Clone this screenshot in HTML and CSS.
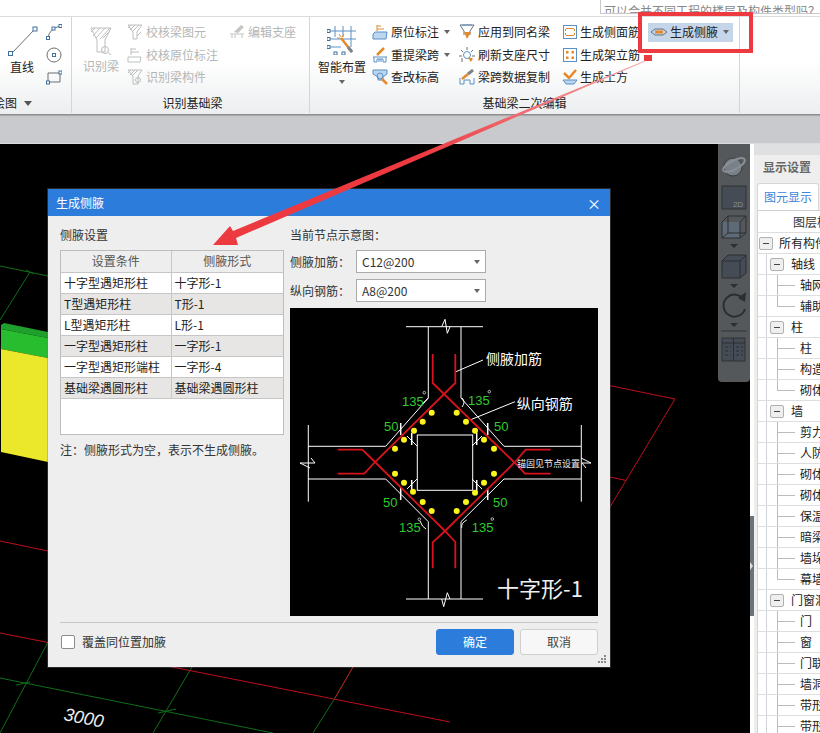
FILE: index.html
```html
<!DOCTYPE html>
<html lang="zh-CN">
<head>
<meta charset="utf-8">
<title>生成侧腋</title>
<link rel="stylesheet" href="styles.css">
</head>
<body>
<div class="app">
  <div class="topbar"><div class="tip">可以合并不同工程的楼层及构件类型吗？</div></div>

  <div class="ribbon">
    <section class="group g1">
      <div class="group-body">
        <div class="large large-line">
          <svg class="lg-ico" width="32" height="32" viewBox="0 0 32 32"><path class="ln-gray" d="M5 29 29 4"/><rect class="sq" x="2.5" y="26.5" width="4" height="4"/><rect class="sq" x="27" y="2" width="4" height="4"/></svg>
          <span>直线</span>
        </div>
        <div class="col col-draw">
          <div class="row"><svg class="ico" width="16" height="16" viewBox="0 0 16 16"><path class="ln-gray" d="M2 14Q3 5 14 2"/><rect class="sq" x="0.5" y="12.5" width="3" height="3"/><rect class="sq" x="6" y="3" width="3" height="3"/><rect class="sq" x="13" y="0.5" width="3" height="3"/></svg></div>
          <div class="row"><svg class="ico" width="16" height="16" viewBox="0 0 16 16"><circle class="ln-gray" cx="8" cy="8" r="7"/><rect class="sq" x="6.5" y="6.5" width="3" height="3"/></svg></div>
          <div class="row"><svg class="ico" width="16" height="16" viewBox="0 0 16 16"><path class="ln-gray" d="M2 4H14V13H2Z"/><rect class="sq" x="0.5" y="12" width="3" height="3"/><rect class="sq" x="13" y="2" width="3" height="3"/></svg></div>
        </div>
      </div>
      <div class="group-label label-start">绘图<i class="caret caret-big"></i></div>
    </section>

    <section class="group g2">
      <div class="group-body">
        <div class="large large-rec disabled">
          <svg class="lg-ico" width="24" height="30" viewBox="0 0 24 30"><path class="ln-dis" d="M2 2H22L16 14V26H8V14Z"/><path class="ln-dis" d="M6 2 2 6M11 2 4 10M16 2 7 12M21 2 11 13M21 5 14 12"/><circle class="ln-dis" cx="16" cy="24" r="3.5"/><path class="ln-dis" d="M19 26.5 22 29"/></svg>
          <span>识别梁</span>
        </div>
        <div class="col col-rec disabled">
          <div class="row"><svg class="ico" width="16" height="16" viewBox="0 0 16 16"><path class="ln-dis" d="M1 1H15L10 8V15H6V8Z"/><path class="ln-dis" d="M4 1 1 4M8 1 3 6M12 1 6 7M10 12 14 8"/></svg><span>校核梁图元</span></div>
          <div class="row"><svg class="ico" width="16" height="16" viewBox="0 0 16 16"><path class="ln-dis" d="M4 1V8M4 2H9M4 5H12"/><path class="ln-dis" d="M1 10H14L13 15H1Z"/></svg><span>校核原位标注</span></div>
          <div class="row"><svg class="ico" width="16" height="16" viewBox="0 0 16 16"><path class="ln-dis" d="M1 1H15L11 7V15H6V7Z"/><path class="ln-dis" d="M4 1 1 4M8 1 3 6M11 1 6 6"/><circle class="ln-dis" cx="11" cy="11" r="2.5"/></svg><span>识别梁构件</span></div>
        </div>
        <div class="col col-edit disabled">
          <div class="row"><svg class="ico" width="16" height="16" viewBox="0 0 16 16"><path class="ln-dis" d="M1 10H15M3 14V11M13 14V11M6 14V11"/><path class="fill-dis" d="M5 8 12 1 15 3 9 9Z"/></svg><span>编辑支座</span></div>
        </div>
      </div>
      <div class="group-label">识别基础梁</div>
    </section>

    <section class="group g3">
      <div class="group-body">
        <div class="large large-smart">
          <svg class="lg-ico" width="30" height="30" viewBox="0 0 30 30"><path class="ln-blue" d="M1 6H29M1 14H29M1 22H14M8 1V12M16 1V12M24 1V22"/><rect class="sq" x="0" y="4.5" width="3" height="3"/><rect class="sq" x="0" y="12.5" width="3" height="3"/><rect class="sq" x="0" y="20.5" width="3" height="3"/><path class="ln-orange-thick" d="M14 13 25 27"/><path class="ln-gray-thick" d="M21 22 25 27"/><path class="ln-orange" d="M12 9 14 12M17 9 15 12M10 13H13"/><rect class="sq" x="7" y="27" width="3" height="3"/><rect class="sq" x="15" y="27" width="3" height="3"/></svg>
          <span>智能布置</span>
          <i class="caret caret-large"></i>
        </div>
        <div class="col col-a">
          <div class="row"><svg class="ico" width="16" height="16" viewBox="0 0 16 16"><path class="ln-orange" d="M5 1V7M5 2H9M5 5H12"/><path class="fill-lblue" d="M1 10 3 8H15L14 15H1Z"/></svg><span>原位标注</span><i class="caret"></i></div>
          <div class="row"><svg class="ico" width="16" height="16" viewBox="0 0 16 16"><path class="ln-orange-thick" d="M5 8 12 1"/><path class="ln-blue" d="M1 10H15M2 10V15H5V12H11V15H14V10M7 12V15M9 12V15"/></svg><span>重提梁跨</span><i class="caret"></i></div>
          <div class="row"><svg class="ico" width="16" height="16" viewBox="0 0 16 16"><path class="fill-lblue" d="M1 1H15V5L11 8V11H6V8L1 5Z"/><circle class="ln-blue" cx="8" cy="7" r="3"/><path class="ln-orange-thick" d="M10 10 15 15"/></svg><span>查改标高</span></div>
        </div>
        <div class="col col-b">
          <div class="row"><svg class="ico" width="16" height="16" viewBox="0 0 16 16"><path class="ln-gray" d="M1 1H15L11 7V11M1 1 5 7V11"/><path class="ln-blue" d="M3 1H13"/><path class="fill-orange" d="M5 8H12L8 15Z"/></svg><span>应用到同名梁</span></div>
          <div class="row"><svg class="ico" width="16" height="16" viewBox="0 0 16 16"><circle class="ln-blue" cx="8" cy="8" r="3.5"/><path class="ln-gray" d="M8 0V3M2 3 4 5M14 3 12 5M0 9H3M13 9H16M3 15V11"/><path class="fill-orange" d="M9 11 14 11 12 15Z"/></svg><span>刷新支座尺寸</span></div>
          <div class="row"><svg class="ico" width="16" height="16" viewBox="0 0 16 16"><path class="ln-blue" d="M1 9V15H5V11H11V15H15V9"/><path class="ln-orange-thick" d="M3 10 9 5"/><path class="ln-gray-thick" d="M9 5 14 1"/></svg><span>梁跨数据复制</span></div>
        </div>
        <div class="col col-c">
          <div class="row"><svg class="ico" width="16" height="16" viewBox="0 0 16 16"><rect class="ln-blue" x="1.5" y="1.5" width="13" height="13"/><path class="ln-orange" d="M4 4.5H12M4 11.5H12M3.5 5V7M12.5 5V7M3.5 9V11M12.5 9V11"/></svg><span>生成侧面筋</span></div>
          <div class="row"><svg class="ico" width="16" height="16" viewBox="0 0 16 16"><rect class="ln-blue" x="1.5" y="1.5" width="13" height="13"/><rect class="fill-orange" x="4" y="4" width="2.5" height="2.5"/><rect class="fill-orange" x="9.5" y="4" width="2.5" height="2.5"/><rect class="fill-orange" x="4" y="9.5" width="2.5" height="2.5"/><rect class="fill-orange" x="9.5" y="9.5" width="2.5" height="2.5"/></svg><span>生成架立筋</span></div>
          <div class="row"><svg class="ico" width="16" height="16" viewBox="0 0 16 16"><path class="ln-orange-thick" d="M2 4 7 9 14 1"/><path class="fill-lblue" d="M1 11H15L12 15H4Z"/></svg><span>生成土方</span></div>
        </div>
        <div class="col col-d">
          <div class="row"><div class="hi-btn"><svg class="ico" width="16" height="16" viewBox="0 0 16 16"><path class="ln-gray" d="M0 8 4 5H12L16 8 12 11H4Z"/><rect class="fill-orange" x="4" y="6.5" width="8" height="3"/></svg><span>生成侧腋</span><i class="caret"></i></div></div>
        </div>
      </div>
      <div class="group-label">基础梁二次编辑</div>
    </section>
  </div>

  <div class="band"></div>

  <div class="workspace">
    <div class="canvas">
      <svg class="scene" width="750" height="589" viewBox="0 144 750 589">
        <path class="cad-green" d="M0 266 48 276M30 272 0 320M26 270 34 274M0 678 273 733M48 642 0 733M192 667 153 733M353 667 335 698 313 733M16 685 30 682M158 713 176 709"/>
        <path class="cad-red" d="M0 541 48 551M0 633 450 722M610 385.700 675 399 610 507M610 477 626 480.500M353 667 335 698"/>
        <path class="block-top" d="M1 325 4 323 48 332V338L1 329Z"/>
        <path class="block-green" d="M1 329 48 338V358L1 349Z"/>
        <path class="block-yellow" d="M1 349 48 358V462L1 452Z"/>
        <text class="dim" transform="translate(63 720) rotate(11)">3000</text>
      </svg>

      <aside class="viewbar">
        <svg width="32" height="238" viewBox="0 0 32 238">
          <circle class="tb-sphere" cx="15" cy="23" r="9"/>
          <ellipse class="tb-ring" cx="16" cy="21" rx="12" ry="4.500" transform="rotate(-28 16 21)"/>
          <rect class="tb-box" x="4" y="42" width="24" height="23"/>
          <text class="tb-2d" x="20" y="63">2D</text>
          <path class="tb-fill" d="M4 78H22V94H4Z"/>
          <path class="tb-line" d="M4 78 10 72H28V89L22 94H4ZM22 78 28 72M22 78V94M10 72V89H28M4 94 10 89"/>
          <path class="tb-caret" d="M12 100H20L16 104Z"/>
          <path class="tb-fill tb-line" d="M4 117 10 111H28V129L22 134H4Z"/>
          <path class="tb-line" d="M4 117H22V134M22 117 28 111"/>
          <path class="tb-caret" d="M12 140H20L16 144Z"/>
          <path class="tb-arc" d="M26 156A11 11 0 1 0 27 165"/>
          <path class="tb-caret" d="M28 148 27 158 20 154ZM12 179H20L16 183Z"/>
          <path class="tb-rule" d="M3 187H29"/>
          <rect class="tb-box" x="4" y="194" width="23" height="23"/>
          <path class="tb-line" d="M15.500 194V217M4 199H27M7 203H10M12 203H13M18 203H21M23 203H25M7 207H10M12 207H13M18 207H21M23 207H25M7 211H10M12 211H13M18 211H21M23 211H25"/>
        </svg>
      </aside>

      <div class="dialog">
        <header class="dlg-title"><span>生成侧腋</span><span class="dlg-close">×</span></header>
        <div class="dlg-main">
          <div class="dlg-left">
            <div class="cap">侧腋设置</div>
            <div class="tbl-box">
              <table class="tbl">
                <thead><tr><th>设置条件</th><th>侧腋形式</th></tr></thead>
                <tbody>
                  <tr><td>十字型遇矩形柱</td><td>十字形-1</td></tr>
                  <tr class="alt"><td>T型遇矩形柱</td><td>T形-1</td></tr>
                  <tr><td>L型遇矩形柱</td><td>L形-1</td></tr>
                  <tr class="alt"><td>一字型遇矩形柱</td><td>一字形-1</td></tr>
                  <tr><td>一字型遇矩形端柱</td><td>一字形-4</td></tr>
                  <tr class="alt"><td>基础梁遇圆形柱</td><td>基础梁遇圆形柱</td></tr>
                </tbody>
              </table>
            </div>
            <div class="note">注：侧腋形式为空，表示不生成侧腋。</div>
          </div>
          <div class="dlg-right">
            <div class="cap">当前节点示意图：</div>
            <div class="field"><label>侧腋加筋：</label><div class="select"><span>C12@200</span><i class="caret"></i></div></div>
            <div class="field"><label>纵向钢筋：</label><div class="select"><span>A8@200</span><i class="caret"></i></div></div>
            <svg class="node" width="308" height="308" viewBox="0 0 308 308">
              <path class="w" d="M116 18.700H193M138.300 18.700V90L95.700 138.300H18M171 18.700V90L214 138.300H291M18.300 117V193.700M291.300 117V193.700M18 171H95.700L138.300 213.700V291M291 171H214L171 213.700V291M116 291H193"/>
              <path class="w" d="M151.700 18.700 155 11.300 157.300 25.300 160 18.700M151.700 291 153.700 298.700 157.300 284.700 160 291M21 150 25 155 10 155 20 160M291 150 301 155 292 155 296 160"/>
              <rect class="w" x="127.300" y="127" width="55.400" height="55.300"/>
              <path class="w-thick" d="M110.700 115V127M197.700 115V127M121.700 125V137M186.700 125V137M121.700 172V185M186.700 172V185M110.700 180V192M197.700 180V192"/>
              <path class="w" d="M117 128 127 138M192 128 182 138M117 181 127 171M192 181 182 171M138 90Q135 94 132 96M172 90Q176 94 172 99M130 213Q132 219 136 221M171.700 219.700Q171 215 176.700 212M193 52 166 63.700M225 93.700 180 112"/>
              <path class="r" d="M142.700 46V75L225 155 235 165.700H260.700M165.300 46V75L85 154 74.300 165.700H47.700M47.700 141.700H72.300L85 154 155 223 165.300 234V260.300M260.700 141.700H235.700L225 154 155 223 142.700 234.300V260.300"/>
              <g class="dots">
                <circle cx="141.700" cy="104.700" r="3"/><circle cx="166.700" cy="104.700" r="3"/><circle cx="132.700" cy="113.700" r="3"/><circle cx="176" cy="113.700" r="3"/>
                <circle cx="124" cy="122.700" r="3"/><circle cx="185" cy="122.700" r="3"/><circle cx="114" cy="131.700" r="3"/><circle cx="194" cy="131.700" r="3"/>
                <circle cx="105" cy="140.700" r="3"/><circle cx="204" cy="140.700" r="3"/><circle cx="105" cy="165.700" r="3"/><circle cx="204" cy="165.700" r="3"/>
                <circle cx="114" cy="174.700" r="3"/><circle cx="194" cy="174.700" r="3"/><circle cx="123" cy="183.700" r="3"/><circle cx="185" cy="184.700" r="3"/>
                <circle cx="132.700" cy="194" r="3"/><circle cx="176" cy="194" r="3"/><circle cx="141.700" cy="203" r="3"/><circle cx="166.700" cy="203" r="3"/>
              </g>
              <g class="deg"><circle cx="134.300" cy="84.700" r="1.300"/><circle cx="199.300" cy="83.700" r="1.300"/><circle cx="129.300" cy="211.300" r="1.300"/><circle cx="202.300" cy="211" r="1.300"/></g>
              <g class="nums">
                <text x="112" y="98">135</text><text x="178" y="97">135</text>
                <text x="94" y="123">50</text><text x="204" y="123">50</text>
                <text x="93" y="199">50</text><text x="203" y="199">50</text>
                <text x="109" y="224">135</text><text x="181.700" y="224">135</text>
              </g>
              <text class="lbl" x="196" y="56">侧腋加筋</text>
              <text class="lbl" x="226.700" y="101">纵向钢筋</text>
              <text class="lbl-sm" x="227" y="159">锚固见节点设置</text>
              <text class="lbl-big" x="207" y="289">十字形-1</text>
            </svg>
          </div>
        </div>
        <footer class="dlg-foot">
          <label class="check"><i class="box"></i><span>覆盖同位置加腋</span></label>
          <div class="btns"><button class="btn primary">确定</button><button class="btn">取消</button></div>
        </footer>
        <svg class="grip" width="9" height="9" viewBox="0 0 9 9"><path d="M6 0H8V2H6ZM3 3H5V5H3ZM6 3H8V5H6ZM0 6H2V8H0ZM3 6H5V8H3ZM6 6H8V8H6Z"/></svg>
      </div>
    </div>

    <aside class="panel">
      <div class="panel-in">
        <div class="panel-top"></div>
        <div class="panel-head">显示设置</div>
        <div class="tab">图元显示</div>
        <div class="tree">
          <div class="t-head">图层构件</div>
          <div class="t-row l0"><i class="exp"></i><span>所有构件</span></div>
          <div class="t-row l1"><b class="gut"></b><i class="exp"></i><span>轴线</span></div>
          <div class="t-row l2"><b class="gut"></b><i class="conn"></i><span>轴网</span></div>
          <div class="t-row l2"><b class="gut"></b><i class="conn end"></i><span>辅助轴线</span></div>
          <div class="t-row l1"><b class="gut"></b><i class="exp"></i><span>柱</span></div>
          <div class="t-row l2"><b class="gut"></b><i class="conn"></i><span>柱</span></div>
          <div class="t-row l2"><b class="gut"></b><i class="conn"></i><span>构造柱</span></div>
          <div class="t-row l2"><b class="gut"></b><i class="conn end"></i><span>砌体柱</span></div>
          <div class="t-row l1"><b class="gut"></b><i class="exp"></i><span>墙</span></div>
          <div class="t-row l2"><b class="gut"></b><i class="conn"></i><span>剪力墙</span></div>
          <div class="t-row l2"><b class="gut"></b><i class="conn"></i><span>人防门框墙</span></div>
          <div class="t-row l2"><b class="gut"></b><i class="conn"></i><span>砌体墙</span></div>
          <div class="t-row l2"><b class="gut"></b><i class="conn"></i><span>砌体加筋</span></div>
          <div class="t-row l2"><b class="gut"></b><i class="conn"></i><span>保温墙</span></div>
          <div class="t-row l2"><b class="gut"></b><i class="conn"></i><span>暗梁</span></div>
          <div class="t-row l2"><b class="gut"></b><i class="conn"></i><span>墙垛</span></div>
          <div class="t-row l2"><b class="gut"></b><i class="conn end"></i><span>幕墙</span></div>
          <div class="t-row l1"><b class="gut"></b><i class="exp"></i><span>门窗洞</span></div>
          <div class="t-row l2"><b class="gut"></b><i class="conn"></i><span>门</span></div>
          <div class="t-row l2"><b class="gut"></b><i class="conn"></i><span>窗</span></div>
          <div class="t-row l2"><b class="gut"></b><i class="conn"></i><span>门联窗</span></div>
          <div class="t-row l2"><b class="gut"></b><i class="conn"></i><span>墙洞</span></div>
          <div class="t-row l2"><b class="gut"></b><i class="conn"></i><span>带形窗</span></div>
          <div class="t-row l2"><b class="gut"></b><i class="conn"></i><span>带形洞</span></div>
        </div>
      </div>
      <div class="handle"><i></i></div>
    </aside>
  </div>

  <svg class="annot" width="820" height="733" viewBox="0 0 820 733">
    <defs>
      <linearGradient id="tail" gradientUnits="userSpaceOnUse" x1="645" y1="61" x2="420" y2="155">
        <stop offset="0" stop-color="#f4a9ac"/>
        <stop offset="1" stop-color="#ec3a40"/>
      </linearGradient>
    </defs>
    <rect class="annot-box" x="640" y="14" width="111" height="37"/>
    <rect class="annot-fill" x="644" y="55" width="8" height="6"/>
    <polygon class="annot-tail" points="645,60.500 233,231 230,226 213,245 238,245 236,238 645,61.500"/>
  </svg>
</div>
</body>
</html>
```

FILE: styles.css
```css
* { box-sizing: border-box; }
html, body { margin: 0; padding: 0; background: #000; }
body { font: 12px/16px "Noto Sans CJK SC", "Liberation Sans", sans-serif; color: #222; }
i { font-style: normal; }
svg { display: block; flex: none; }

.app { position: relative; width: 820px; height: 733px; overflow: hidden; display: flex; flex-direction: column; background: #fff; }

/* top strip */
.topbar { height: 17px; flex: none; display: flex; justify-content: flex-end; background: #fff; border-bottom: 1px solid #dcdcdc; }
.tip { width: 220px; height: 14px; padding-left: 3px; overflow: hidden; white-space: nowrap; border-left: 1px solid #c8c8c8; border-bottom: 1px solid #c8c8c8; color: #888; line-height: 22px; }

/* ribbon */
.ribbon { height: 98px; flex: none; display: flex; background: linear-gradient(#fff 45%, #eceeef); border-bottom: 1px solid #8c8e90; box-shadow: 0 1px 1px #aaa; position: relative; }
.group { display: flex; flex-direction: column; border-right: 1px solid #d3d5d6; height: 96px; }
.g1 { width: 72px; }
.g2 { width: 238px; }
.g3 { width: 430px; }
.group-body { height: 76px; display: flex; }
.group-label { height: 20px; line-height: 20px; text-align: center; white-space: nowrap; color: #222; }
.g2 .group-label { padding-left: 4px; }
.label-start { display: flex; align-items: center; gap: 7px; margin-left: -7px; }
.large { display: flex; flex-direction: column; align-items: center; }
.large span { white-space: nowrap; line-height: 16px; }
.large-line { width: 44px; padding-top: 8px; }
.large-line .lg-ico { margin-bottom: 2px; margin-left: -1px; height: 32px; }
.large-rec { width: 36px; margin-left: 11px; padding-top: 9px; }
.large-rec .lg-ico { margin-bottom: 2px; }
.large-smart { width: 48px; margin-left: 8px; padding-top: 8px; }
.large-smart .lg-ico { margin-bottom: 4px; }
.caret-large { margin-top: 5px; }
.col { padding-top: 4px; }
.row { height: 22.5px; display: flex; align-items: center; white-space: nowrap; }
.row .ico { margin-right: 3px; }
.col-draw { margin-left: 2px; }
.col-rec { width: 102px; margin-left: 8px; }
.col-edit { width: 68px; }
.col-a { width: 87px; margin-left: 6px; }
.col-b { width: 103px; }
.col-c { width: 86px; }
.row .ico.ico, .col-c .row .ico { margin-right: 3px; }
.col-c .row .ico { margin-right: 2px; }
.hi-btn { width: 85px; height: 19px; display: flex; align-items: center; padding-left: 3px; background: #c5d6eb; }
.caret { display: inline-block; flex: none; width: 0; height: 0; margin-left: 5px; border: 3.5px solid transparent; border-top: 4px solid #666; border-bottom: 0; }
.caret-big { margin-left: 0; border-width: 4px; border-top: 5px solid #555; border-bottom: 0; }
.large .caret { margin-left: 0; }
.disabled { color: #b4b6b6; }

.ln-gray, .ln-blue, .ln-orange, .ln-dis, .ln-gray-thick, .ln-orange-thick { fill: none; }
.ln-gray { stroke: #6b7075; stroke-width: 1; }
.ln-blue { stroke: #5b90c6; stroke-width: 1; }
.ln-orange { stroke: #e08a2f; stroke-width: 1; }
.ln-dis { stroke: #bcbebe; stroke-width: 1; }
.ln-gray-thick { stroke: #7d838a; stroke-width: 3; }
.ln-orange-thick { stroke: #e58a2b; stroke-width: 2.500; }
.fill-dis { fill: #c4c6c6; }
.fill-orange { fill: #e58a2b; }
.fill-lblue { fill: #bcd6ef; stroke: #5b90c6; stroke-width: 1; }
.sq { fill: #fff; stroke: #41719f; stroke-width: 1; }

.band { height: 29px; flex: none; background: #c8cacd; border-bottom: 1px solid #dadbdd; }

/* workspace */
.workspace { flex: 1; min-height: 0; display: flex; }
.canvas { position: relative; width: 750px; flex: none; background: #000; overflow: hidden; }
.scene { position: absolute; left: 0; top: 0; }
.cad-green { fill: none; stroke: #0f6e18; stroke-width: 1; }
.cad-red { fill: none; stroke: #c00d1e; stroke-width: 1; }
.block-top { fill: #1f9f2c; }
.block-green { fill: #27bd2e; }
.block-yellow { fill: #ebe72a; }
.dim { fill: #eee; font: 18px "Liberation Sans", sans-serif; font-style: italic; }

/* view bar */
.viewbar { position: absolute; left: 718px; top: 0; width: 32px; height: 238px; background: #55585a; border-radius: 0 0 4px 4px; }
.tb-sphere { fill: #7a8088; stroke: #3a3d40; }
.tb-ring { fill: none; stroke: #8a9097; stroke-width: 2; }
.tb-box { fill: #454c55; stroke: #2e3237; }
.tb-2d { fill: #888d92; font: 8px "Liberation Sans", sans-serif; text-anchor: middle; }
.tb-fill { fill: #5e6a77; }
.tb-line { fill: none; stroke: #2b2f33; stroke-width: 1; }
path.tb-fill.tb-line { fill: #454c55; }
.tb-caret { fill: #2b2f33; }
.tb-arc { fill: none; stroke: #2b2f33; stroke-width: 2; }
.tb-rule { stroke: #2f3235; stroke-width: 1; }

/* dialog */
.dialog { position: absolute; left: 48px; top: 45px; width: 562px; height: 478px; background: #eeeeee; display: flex; flex-direction: column; box-shadow: 0 0 0 1px rgba(120,120,120,.35); }
.dlg-title { height: 27px; flex: none; display: flex; align-items: center; justify-content: space-between; padding: 0 9px 0 8px; background: #2c7cdc; color: #fff; }
.dlg-close { font-size: 14px; line-height: 16px; }
.dlg-main { display: flex; gap: 6px; padding: 11px 12px 0; }
.dlg-left { width: 224px; flex: none; }
.dlg-right { width: 308px; flex: none; }
.cap { height: 16px; margin-bottom: 7px; color: #333; }
.tbl-box { height: 185px; background: #fff; border: 1px solid #bdbdbd; }
.tbl { width: 100%; table-layout: fixed; border-collapse: collapse; }
.tbl th, .tbl td { height: 21px; padding: 0 0 0 3px; font-weight: 400; line-height: 16px; border: 1px solid #c6c6c6; border-top: 0; border-left: 0; white-space: nowrap; overflow: hidden; }
.tbl th:first-child, .tbl td:first-child { width: 110px; }
.tbl th:last-child, .tbl td:last-child { border-right: 0; }
.tbl th { padding: 0; text-align: center; background: #eeeeee; color: #555; }
.alt td { background: #e7e6e4; }
.note { margin-top: 7px; color: #333; }
.field { height: 23px; margin-bottom: 6px; display: flex; align-items: center; color: #333; }
.field label { width: 66px; }
.select { width: 130px; height: 23px; padding: 0 5px; display: flex; align-items: center; justify-content: space-between; background: #fff; border: 1px solid #ababab; }
.node { background: #000; }
.w { fill: none; stroke: #fff; stroke-width: 1; }
.w-thick { fill: none; stroke: #fff; stroke-width: 1.500; }
.r { fill: none; stroke: #d8131c; stroke-width: 1.800; }
.dots { fill: #fcf51c; }
.deg { fill: none; stroke: #ddd; stroke-width: .8; }
.nums { fill: #2fcb2f; font: 13px "Liberation Sans", sans-serif; }
.lbl { fill: #fff; font: 14px "Noto Sans CJK SC", sans-serif; }
.lbl-sm { fill: #eee; font: 9px "Noto Sans CJK SC", sans-serif; }
.lbl-big { fill: #eee; font: 22px "Noto Sans CJK SC", sans-serif; }
.dlg-foot { margin: 6px 12px 0; padding-top: 6px; display: flex; align-items: flex-start; justify-content: space-between; border-top: 1px solid #c5c7cc; }
.check { display: flex; align-items: center; gap: 7px; height: 26px; margin-left: 1px; color: #333; }
.box { width: 14px; height: 14px; background: #fff; border: 1px solid #8b8b8b; border-radius: 2px; }
.btns { display: flex; gap: 6px; }
.btn { width: 78px; height: 26px; padding: 0; font: inherit; color: #444; background: #f7f7f7; border: 1px solid #cfcfcf; border-radius: 3px; }
.btn.primary { background: #2c7cdc; color: #fff; border-color: #2c7cdc; }
.grip { position: absolute; right: 3px; bottom: 3px; fill: #8a8a8a; }

/* right panel */
.panel { position: relative; width: 70px; flex: none; padding-left: 4px; background: #fff; overflow: hidden; }
.panel-in { height: 100%; background: #eeeeee; overflow: hidden; }
.panel-top { height: 11px; background: #dfe0e2; }
.panel-head { height: 24px; padding-left: 9px; line-height: 24px; color: #666; font-weight: 700; white-space: nowrap; }
.tab { width: 62px; height: 27px; margin: 4px 0 0 3px; line-height: 26px; text-align: center; color: #3a86d8; background: #fff; border: 1px solid #d6d6d6; border-bottom: 0; border-radius: 3px 3px 0 0; white-space: nowrap; }
.tree { margin-left: 3px; width: 200px; height: 560px; background: #fff; border-left: 1px solid #cfd3da; border-top: 1px solid #cfd0d2; }
.t-head { height: 22px; padding-left: 35px; line-height: 22px; color: #333; border-bottom: 1px solid #dcdcdc; white-space: nowrap; }
.t-row { height: 21px; display: flex; align-items: center; white-space: nowrap; border-bottom: 1px solid #dedede; color: #222; }
.gut { width: 9px; align-self: stretch; flex: none; border-right: 1px solid #cfd3da; }
.exp { position: relative; width: 14px; height: 13px; flex: none; background: linear-gradient(#444,#444) center/6px 1px no-repeat, #efefef; border: 1px solid #aeb0b2; border-radius: 2px; }
.l0 { padding-left: 1px; }
.l0 .exp { margin-right: 6px; }
.l1 .exp { margin: 0 7px 0 3px; }
.conn { width: 18px; margin: 0 5px 0 10px; align-self: stretch; flex: none; background: linear-gradient(#b9bcc0,#b9bcc0) left top/1px 100% no-repeat, linear-gradient(#b9bcc0,#b9bcc0) left center/100% 1px no-repeat; }
.conn.end { background: linear-gradient(#b9bcc0,#b9bcc0) left top/1px 50% no-repeat, linear-gradient(#b9bcc0,#b9bcc0) left center/100% 1px no-repeat; }
.handle { position: absolute; left: 0; top: 372px; width: 4px; height: 100px; display: flex; align-items: center; background: #6c7378; }
.handle i { width: 0; height: 0; border: 4px solid transparent; border-left: 3px solid #dfe1e3; border-right: 0; }

/* screenshot annotation */
.annot { position: absolute; left: 0; top: 0; pointer-events: none; }
.annot-box { fill: none; stroke: #ec3a40; stroke-width: 4; }
.annot-fill { fill: #ec3a40; }
.annot-tail { fill: url(#tail); }
```
